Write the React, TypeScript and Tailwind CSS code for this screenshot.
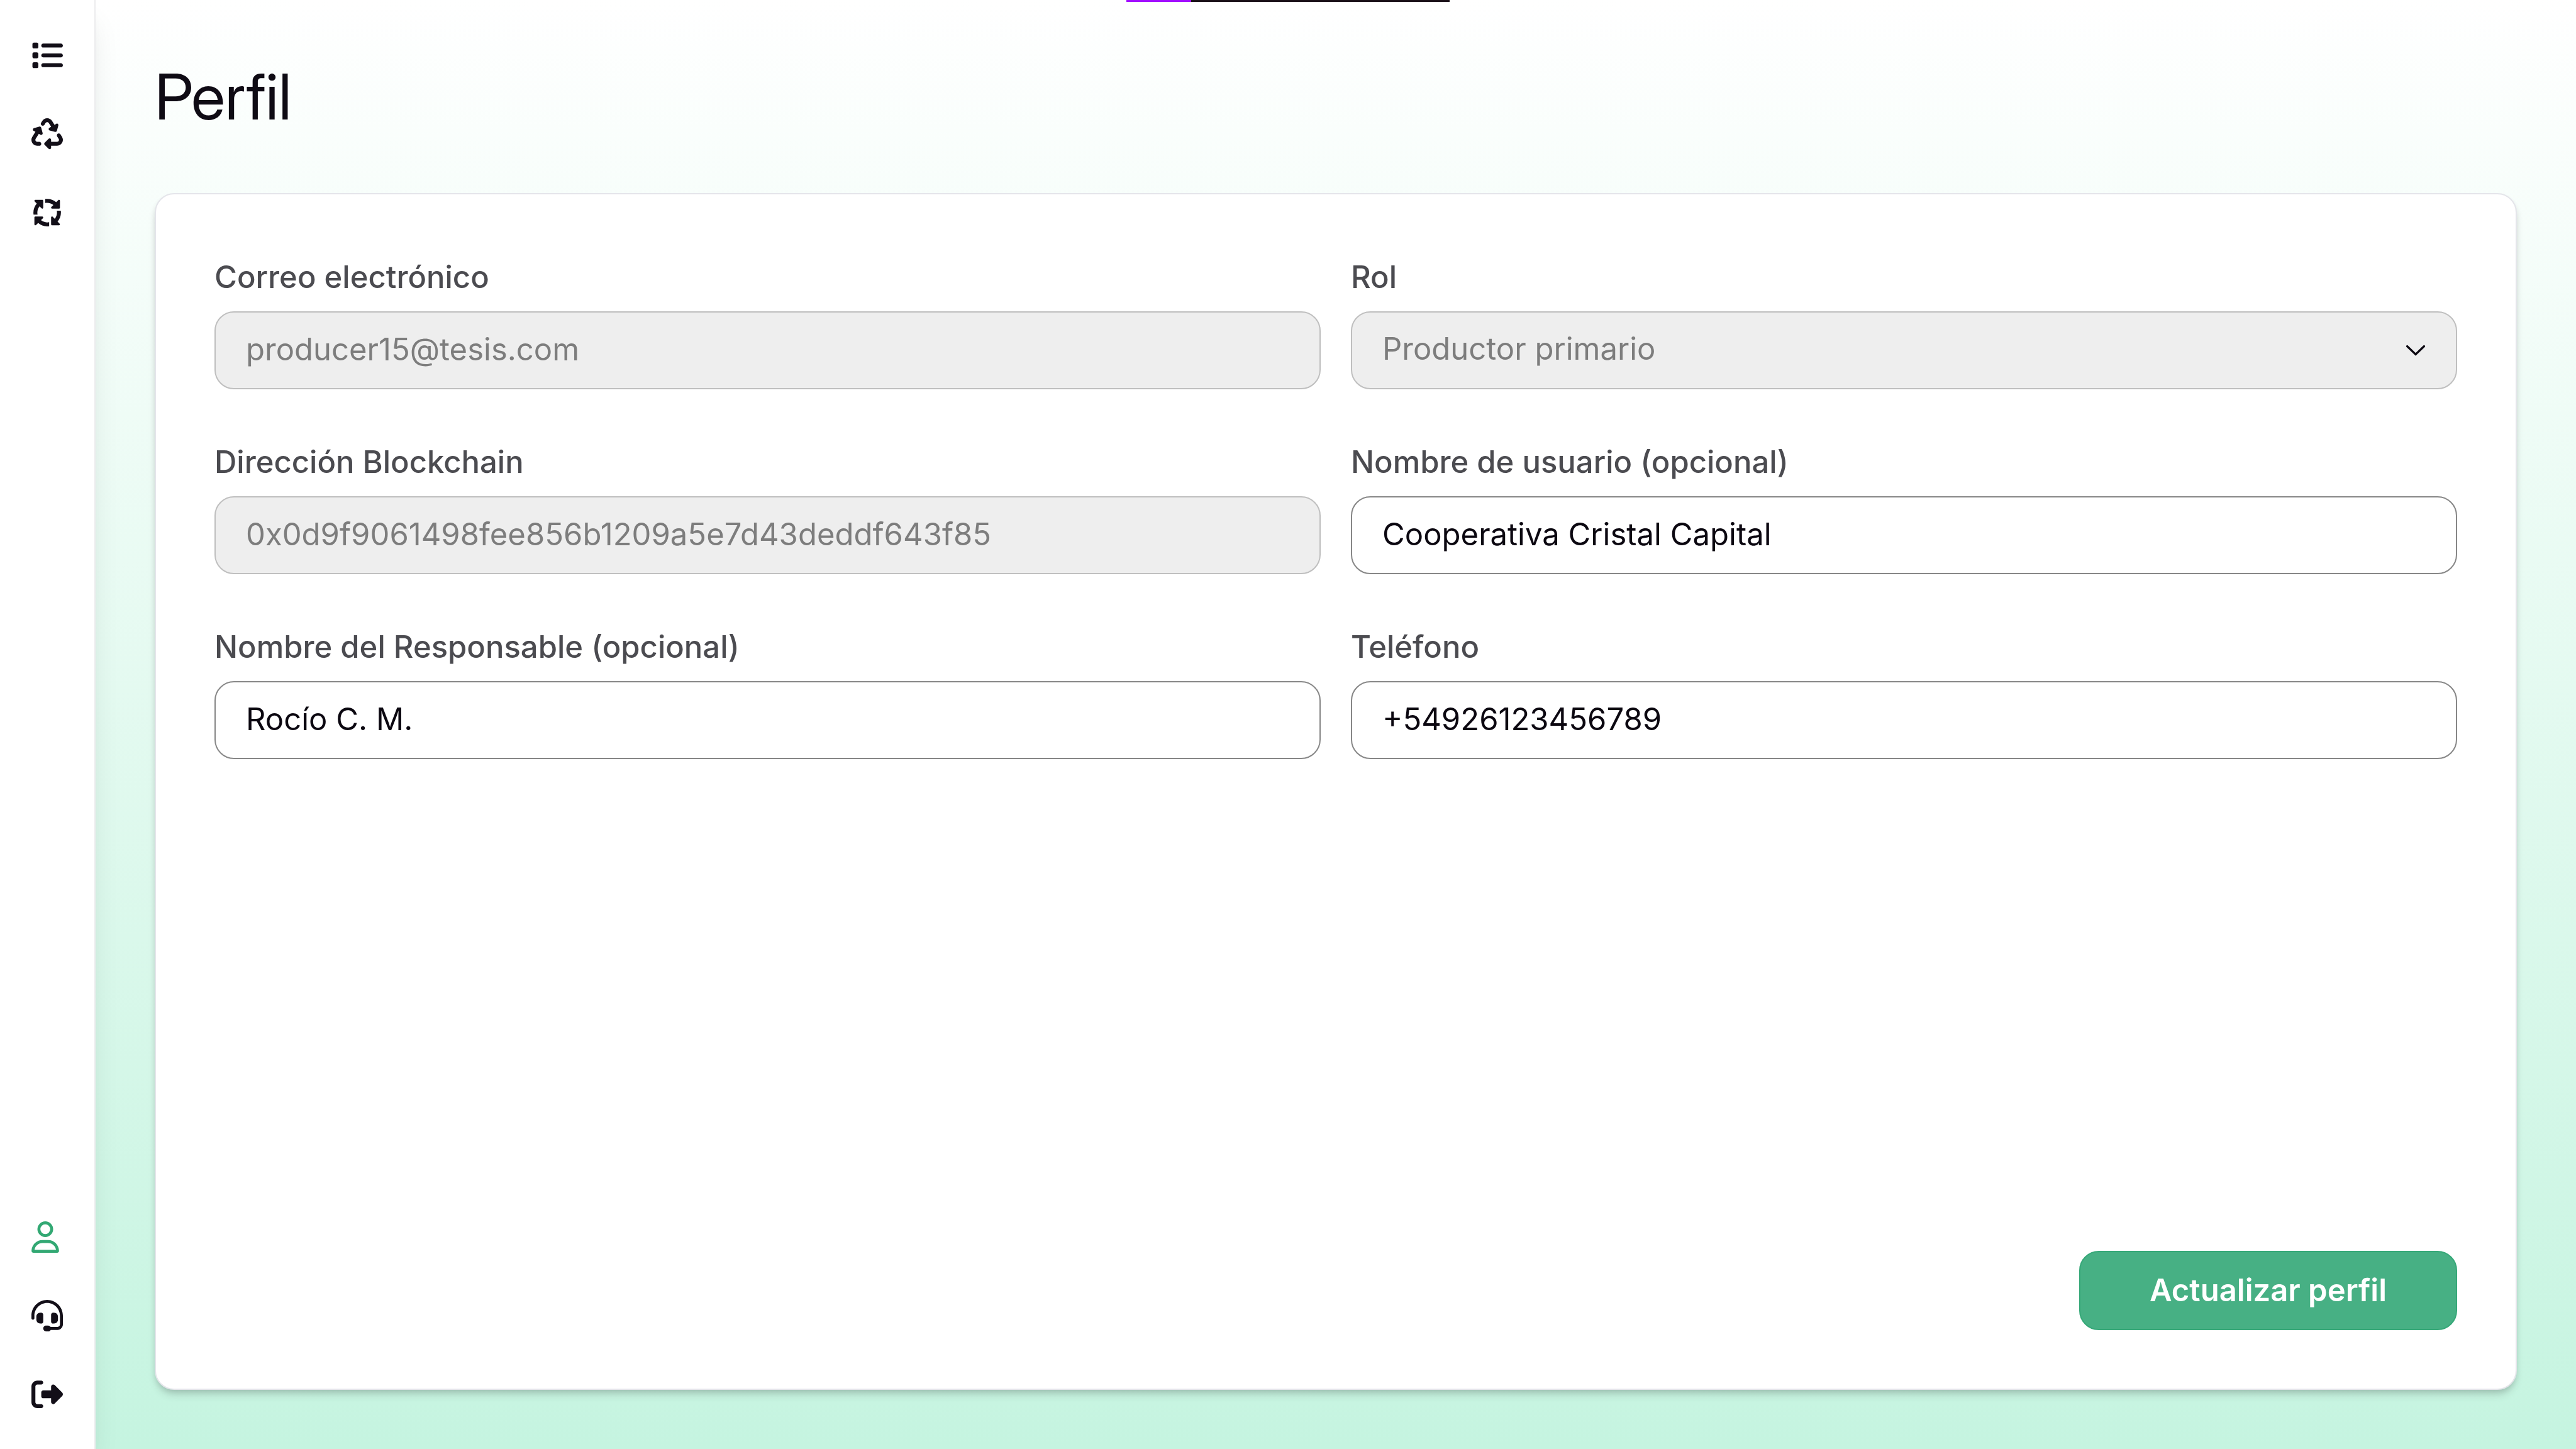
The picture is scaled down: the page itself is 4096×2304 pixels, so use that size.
import type { ComponentType } from "react";
import {
  FaArrowsSpin,
  FaHeadset,
  FaList,
  FaRecycle,
  FaRegUser,
  FaRightFromBracket,
} from "react-icons/fa6";

type NavItem = {
  label: string;
  Icon: ComponentType<{ className?: string }>;
  active?: boolean;
};

const mainNav: NavItem[] = [
  { label: "Listado", Icon: FaList },
  { label: "Reciclaje", Icon: FaRecycle },
  { label: "Transformación", Icon: FaArrowsSpin },
];

const accountNav: NavItem[] = [
  { label: "Perfil", Icon: FaRegUser, active: true },
  { label: "Soporte", Icon: FaHeadset },
  { label: "Cerrar sesión", Icon: FaRightFromBracket },
];

function NavGroup({ items }: { items: NavItem[] }) {
  return (
    <ul className="flex flex-col gap-[75px]">
      {items.map(({ label, Icon, active }) => (
        <li key={label}>
          <a
            href="#"
            aria-label={label}
            aria-current={active ? "page" : undefined}
            className={active ? "block text-[#32a873]" : "block text-[#130f18]"}
          >
            <Icon className={active ? "h-[50px] w-[44px]" : "size-[50px]"} />
          </a>
        </li>
      ))}
    </ul>
  );
}

const labelClass = "text-[49px] leading-[78px] font-medium text-[#4b4b50]";
const controlClass =
  "h-[124px] w-full appearance-none rounded-[31px] border-2 border-[#878787] bg-white px-12 pb-1 text-[49px] text-[#0b0710] opacity-100 disabled:border-[#bfbfbf] disabled:bg-[#eeeeee] disabled:text-[#7d7d7d]";

type FieldProps = {
  id: string;
  label: string;
  value: string;
  type?: string;
  disabled?: boolean;
};

function TextField({ id, label, value, type = "text", disabled }: FieldProps) {
  return (
    <div className="flex flex-col gap-[15px]">
      <label htmlFor={id} className={labelClass}>
        {label}
      </label>
      <input
        id={id}
        type={type}
        defaultValue={value}
        disabled={disabled}
        className={controlClass}
      />
    </div>
  );
}

function RoleField() {
  return (
    <div className="flex flex-col gap-[15px]">
      <label htmlFor="rol" className={labelClass}>
        Rol
      </label>
      <div className="relative">
        <select id="rol" disabled className={controlClass}>
          <option>Productor primario</option>
        </select>
        <svg
          viewBox="0 0 32 18"
          aria-hidden="true"
          className="pointer-events-none absolute inset-y-0 right-[50px] my-auto h-[18px] w-8"
        >
          <path
            d="M2.5 2.5 L16 15.5 L29.5 2.5"
            fill="none"
            stroke="#0b0710"
            strokeWidth="3.2"
            strokeLinecap="round"
          />
        </svg>
      </div>
    </div>
  );
}

export default function App() {
  return (
    <div className="flex min-h-screen bg-linear-to-b from-white to-[#c5f4e0] font-['Inter',sans-serif] text-[#0f0b14]">
      <div
        role="progressbar"
        aria-valuenow={20}
        aria-label="Cargando"
        className="absolute top-0 left-1/2 h-[3px] w-[514px] -translate-x-1/2 bg-[#1a1018]"
      >
        <div className="h-full w-1/5 bg-[#a10cff]" />
      </div>

      <nav className="flex w-[152px] shrink-0 flex-col justify-between border-r-2 border-[#ececee] bg-white pt-[63px] pb-[62px] pl-[50px] shadow-[0_31px_47px_-9px_rgba(0,0,0,0.1),0_12px_19px_-12px_rgba(0,0,0,0.1)]">
        <NavGroup items={mainNav} />
        <NavGroup items={accountNav} />
      </nav>

      <main className="flex flex-1 flex-col gap-[93px] px-[94px] pt-[94px] pb-[94px]">
        <h1 className="font-['Inter_Display','Inter',sans-serif] text-[100px] leading-[120px] font-normal">
          Perfil
        </h1>

        <form
          onSubmit={(e) => e.preventDefault()}
          className="flex flex-1 flex-col justify-between rounded-[31px] border-2 border-[#e4e5ea] bg-white p-[93px] shadow-[0_10px_14px_-2px_rgba(0,0,0,0.12),0_5px_10px_-2px_rgba(0,0,0,0.12)]"
        >
          <div className="grid grid-cols-2 gap-x-12 gap-y-[77px]">
            <TextField
              id="correo"
              label="Correo electrónico"
              type="email"
              value="producer15@tesis.com"
              disabled
            />
            <RoleField />
            <TextField
              id="direccion"
              label="Dirección Blockchain"
              value="0x0d9f9061498fee856b1209a5e7d43deddf643f85"
              disabled
            />
            <TextField
              id="usuario"
              label="Nombre de usuario (opcional)"
              value="Cooperativa Cristal Capital"
            />
            <TextField
              id="responsable"
              label="Nombre del Responsable (opcional)"
              value="Rocío C. M."
            />
            <TextField
              id="telefono"
              label="Teléfono"
              type="tel"
              value="+54926123456789"
            />
          </div>

          <button
            type="submit"
            className="h-[126px] self-end rounded-[31px] border-2 border-[#36a878] bg-[#47b084] px-[110px] text-[49px] font-semibold text-white"
          >
            Actualizar perfil
          </button>
        </form>
      </main>
    </div>
  );
}
